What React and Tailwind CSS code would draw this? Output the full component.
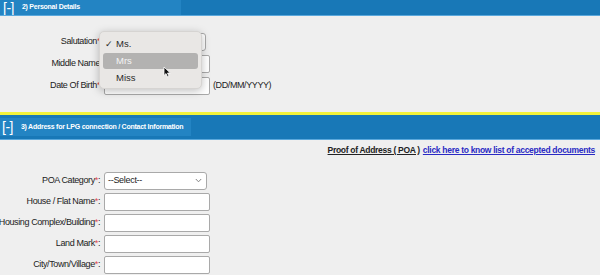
import React from "react";

const font = { fontFamily: '"Liberation Sans", Arial, sans-serif' };

function Label({ text, colon }) {
  return (
    <div className="w-[100px] shrink-0 flex justify-end whitespace-nowrap text-[9px] tracking-[-0.4px] text-[#222]">
      <span>
        {text}
        <span className="text-[#e0464c]">*</span>
        {colon ? ":" : ""}
      </span>
    </div>
  );
}

function Input({ w = "w-[106px]" }) {
  return <div className={`${w} h-[18px] bg-white border border-[#a9a9a9] rounded-[2px]`} />;
}

function Select({ text, w = "w-[103px]" }) {
  return (
    <div className={`${w} h-[18px] bg-white border border-[#a9a9a9] rounded-[3px] flex items-center justify-between px-[3px]`}>
      <span className="text-[9px] tracking-[-0.3px] text-[#222] whitespace-nowrap">{text}</span>
      <svg width="7" height="5" viewBox="0 0 7 5" className="mr-[1px]">
        <path d="M0.8 1 L3.5 3.8 L6.2 1" stroke="#777" strokeWidth="0.9" fill="none" />
      </svg>
    </div>
  );
}

function Bracket() {
  return (
    <span className="text-[14px] leading-none text-white font-light tracking-[-0.5px] whitespace-nowrap">[-]</span>
  );
}

export default function App() {
  return (
    <div className="w-[600px] h-[275px] overflow-hidden bg-[#efefef] relative" style={font}>
      {/* Section 2 header */}
      <div className="flex flex-col">
        <div className="flex h-[15px] bg-[#1878b7]">
          <div className="flex items-center w-[181px] bg-[#2384c3] pl-[3px]">
            <Bracket />
            <span className="ml-[8px] text-[7px] font-bold text-white tracking-[-0.25px] whitespace-nowrap">2) Personal Details</span>
          </div>
        </div>
        <div className="h-[1px] bg-[#5aa8dc]" />
      </div>

      {/* Personal details body */}
      <div className="flex flex-col pt-[17px] h-[96px] gap-[4px]">
        <div className="flex items-center gap-[3px]">
          <Label text="Salutation" />
          <Select text="Ms." />
        </div>
        <div className="flex items-center gap-[4px]">
          <div className="w-[100px] shrink-0 text-right whitespace-nowrap text-[9px] tracking-[-0.4px] text-[#222]">Middle Name</div>
          <Input />
        </div>
        <div className="flex items-center gap-[4px]">
          <Label text="Date Of Birth" />
          <Input />
          <span className="text-[9px] tracking-[-0.4px] text-[#222] ml-[-1px] whitespace-nowrap">(DD/MM/YYYY)</span>
        </div>
      </div>

      {/* Yellow separator */}
      <div className="h-[3px] bg-[#f2f23a]" />

      {/* Section 3 header */}
      <div className="flex flex-col">
        <div className="flex h-[24px] bg-[#1878b7] items-center">
          <div className="flex items-center w-[191px] h-[18px] bg-[#2384c3] pl-[2px]">
            <Bracket />
            <span className="ml-[8px] text-[7px] font-bold text-white tracking-[-0.25px] whitespace-nowrap">3) Address for LPG connection / Contact Information</span>
          </div>
        </div>
        <div className="h-[1px] bg-[#5aa8dc]" />
      </div>

      {/* Proof of address */}
      <div className="flex justify-end pr-[5px] pt-[4px] text-[8.5px] font-bold tracking-[-0.3px] whitespace-nowrap">
        <span className="underline text-[#222]">Proof of Address ( POA )</span>
        <span className="underline text-[#2a2ac4] ml-[3px]">click here to know list of accepted documents</span>
      </div>

      {/* Address rows */}
      <div className="flex flex-col gap-[3px] pt-[15px]">
        <div className="flex items-center gap-[4px]">
          <Label text="POA Category" colon />
          <Select text="--Select--" />
        </div>
        <div className="flex items-center gap-[4px]">
          <Label text="House / Flat Name" colon />
          <Input />
        </div>
        <div className="flex items-center gap-[4px]">
          <Label text="Housing Complex/Building" colon />
          <Input />
        </div>
        <div className="flex items-center gap-[4px]">
          <Label text="Land Mark" colon />
          <Input />
        </div>
        <div className="flex items-center gap-[4px]">
          <Label text="City/Town/Village" colon />
          <Input />
        </div>
      </div>

      {/* Dropdown menu overlay */}
      <div className="absolute left-[99px] top-[31px] w-[103px] h-[58px] rounded-[5px] bg-[#e9e7e5] shadow-[0_2px_8px_rgba(0,0,0,0.25)] border border-[#d6d4d2] flex flex-col pt-[4px] px-[3px]">
        <div className="flex items-center h-[16px] text-[9.5px] text-[#2a2a2a]">
          <span className="w-[13px] pl-[2px] text-[9px] leading-none">✓</span>
          <span>Ms.</span>
        </div>
        <div className="flex items-center h-[16px] rounded-[3px] bg-[#b3b2b1] text-[9.5px] text-[#f4f4f4] mt-[1px]">
          <span className="pl-[13px]">Mrs</span>
        </div>
        <div className="flex items-center h-[16px] text-[9.5px] text-[#2a2a2a] mt-[1px]">
          <span className="pl-[13px]">Miss</span>
        </div>
      </div>

      {/* Cursor */}
      <svg className="absolute left-[163px] top-[66px]" width="9" height="12" viewBox="0 0 9 12">
        <path d="M1 1 L1 9.5 L3 7.6 L4.6 11 L6 10.3 L4.5 7 L7.3 7 Z" fill="#111" stroke="#fff" strokeWidth="0.8" strokeLinejoin="round" />
      </svg>
    </div>
  );
}
